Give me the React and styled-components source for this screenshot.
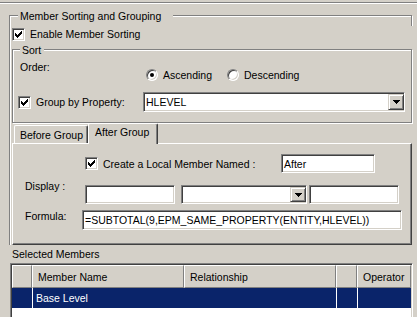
import styled, { createGlobalStyle } from "styled-components"

const GlobalStyle = createGlobalStyle`
  html, body {
    margin: 0;
    padding: 0;
    background: #d4d0c8;
  }
  body {
    font-family: "Liberation Sans", Arial, sans-serif;
    font-size: 10.5px;
    line-height: 16px;
    color: #000;
  }
  * { box-sizing: border-box; }
`

const Window = styled.div`
  width: 417px;
  height: 317px;
  overflow: hidden;
  background: #d4d0c8;
`

const TopRule = styled.div`
  margin-top: 2px;
  height: 2px;
  border-top: 1px solid #808080;
  border-bottom: 1px solid #fff;
`

const OuterGroup = styled.div`
  position: relative;
  margin: 11px 0 0 9px;
  width: 403px;
  padding-top: 10px;
  border-top: 1px solid #808080;
  border-left: 1px solid #808080;
  box-shadow: inset 1px 1px 0 #fff;

  &::after {
    content: "";
    position: absolute;
    top: 0;
    right: 0;
    width: 1px;
    height: 10px;
    background: #808080;
    box-shadow: 1px 0 0 #fff;
  }
`

const Legend = styled.span`
  position: absolute;
  top: -8px;
  left: ${p => p.$left}px;
  padding: 0 ${p => p.$padRight}px 0 2px;
  background: #d4d0c8;
  line-height: 16px;
  white-space: nowrap;
`

const EnableRow = styled.div`
  display: flex;
  align-items: center;
  height: 16px;
  margin-left: 2px;
`

const CheckBox = styled.span`
  display: inline-flex;
  align-items: center;
  justify-content: center;
  flex: none;
  width: 13px;
  height: 13px;
  background: #fff;
  border: 1px solid;
  border-color: #808080 #fff #fff #808080;
  box-shadow: inset 1px 1px 0 #404040, inset -1px -1px 0 #d4d0c8;
`

const CheckText = styled.span`
  margin-left: 5px;
  white-space: nowrap;
`

const SortGroup = styled.div`
  position: relative;
  margin: 7px 0 0 2px;
  width: 400px;
  height: 74px;
  padding-top: 9px;
  border: 1px solid #808080;
  box-shadow: inset 1px 1px 0 #fff, 1px 1px 0 #fff;
`

const OrderRow = styled.div`
  display: flex;
  align-items: flex-start;
  height: 24px;
`

const OrderLabel = styled.span`
  width: 133px;
  padding-left: 7px;
`

const RadioSet = styled.div`
  display: flex;
  margin-top: 8px;
  height: 16px;
  align-items: center;
`

const RadioItem = styled.label`
  display: flex;
  align-items: center;
  width: ${p => (p.$width ? `${p.$width}px` : "auto")};
  span { margin-left: 5px; }
`

const Radio = styled.i`
  display: inline-flex;
  align-items: center;
  justify-content: center;
  flex: none;
  width: 12px;
  height: 12px;
  border-radius: 50%;
  background: #fff;
  border: 1px solid;
  border-color: #808080 #fff #fff #808080;
  box-shadow: inset 1px 1px 0 #404040, inset -1px -1px 0 #d4d0c8;

  &::after {
    content: "";
    width: 4px;
    height: 4px;
    border-radius: 50%;
    background: ${p => (p.$checked ? "#000" : "transparent")};
  }
`

const GroupRow = styled.div`
  display: flex;
  align-items: center;
  height: 20px;
  margin-top: 9px;
`

const CheckField = styled.div`
  display: flex;
  align-items: center;
  width: ${p => p.$width}px;
  padding-left: ${p => p.$indent || 0}px;
  flex: none;
`

const Field = styled.div`
  display: flex;
  align-items: center;
  flex: none;
  width: ${p => p.$width}px;
  height: ${p => p.$height}px;
  margin-left: ${p => p.$gap || 0}px;
  padding: ${p => (p.$combo ? "0 0 0 2px" : "0 1px 0 2px")};
  background: #fff;
  border: 1px solid;
  border-color: #808080 #fff #fff #808080;
  box-shadow: inset 1px 1px 0 #404040, inset -1px -1px 0 #d4d0c8;
  white-space: nowrap;
  overflow: hidden;
`

const ComboInner = styled.div`
  display: flex;
  align-items: stretch;
  width: 100%;
  height: 100%;
  padding: 1px 0;
`

const ComboValue = styled.span`
  display: flex;
  align-items: center;
  flex: 1;
  overflow: hidden;
`

const DropButton = styled.span`
  display: flex;
  align-items: center;
  justify-content: center;
  flex: none;
  width: 16px;
  height: 100%;
  background: #d4d0c8;
  border: 1px solid;
  border-color: #d4d0c8 #404040 #404040 #d4d0c8;
  box-shadow: inset 1px 1px 0 #fff, inset -1px -1px 0 #808080;
`

const Tabs = styled.div`
  margin-left: 2px;
  width: 400px;
`

const TabStrip = styled.div`
  display: flex;
  align-items: flex-end;
  height: 20px;
  padding-left: 2px;
`

const Tab = styled.div`
  position: relative;
  z-index: ${p => (p.$active ? 1 : 0)};
  width: ${p => p.$width}px;
  height: ${p => (p.$active ? 21 : 18)}px;
  margin-bottom: ${p => (p.$active ? -1 : 0)}px;
  padding: ${p => (p.$active ? "0 0 0 6px" : "1px 0 0 5px")};
  background: #d4d0c8;
  border-top: 1px solid #fff;
  border-left: 1px solid #fff;
  border-right: 1px solid #404040;
  border-radius: 2px 2px 0 0;
  box-shadow: inset -1px 0 0 #808080;
  white-space: nowrap;
`

const TabPanel = styled.div`
  height: 102px;
  padding-top: 10px;
  border: 1px solid;
  border-color: #fff #404040 #404040 #fff;
  box-shadow: inset -1px -1px 0 #808080;
`

const PanelRow = styled.div`
  display: flex;
  align-items: ${p => p.$align || "center"};
  height: ${p => p.$height}px;
  margin-top: ${p => p.$top || 0}px;
`

const FieldLabel = styled.span`
  flex: none;
  width: ${p => p.$width}px;
  margin-left: 12px;
  white-space: nowrap;
`

const Fields = styled.div`
  display: flex;
  margin-top: ${p => p.$top}px;
`

const SectionLabel = styled.div`
  margin: 1px 0 0 12px;
  height: 16px;
`

const ListView = styled.div`
  margin: 1px 0 0 10px;
  width: 403px;
  height: 60px;
  padding: 1px;
  background: #fff;
  border: 1px solid;
  border-color: #808080 #fff #fff #808080;
  box-shadow: inset 1px 1px 0 #404040, inset -1px -1px 0 #d4d0c8;
`

const ListGrid = styled.div`
  display: grid;
  grid-template-columns: 20px 152px 152px 21px 54px;
`

const HeaderCell = styled.div`
  display: flex;
  align-items: center;
  height: 23px;
  padding-left: 5px;
  background: #d4d0c8;
  border-top: 1px solid #fff;
  border-left: 1px solid #fff;
  border-right: 1px solid #808080;
  border-bottom: 1px solid #808080;
  white-space: nowrap;
  overflow: hidden;
`

const RowCell = styled.div`
  display: flex;
  align-items: center;
  height: 20px;
  padding-left: 3px;
  background: #0a246a;
  color: #fff;
  border-left: 1px solid ${p => (p.$line ? "#fff" : "#0a246a")};
  white-space: nowrap;
`

const CHECK_ROWS = [
  [6, 0, 1], [5, 1, 2], [0, 2, 1], [4, 2, 3], [0, 3, 2],
  [3, 3, 3], [0, 4, 5], [1, 5, 3], [2, 6, 1],
]

function CheckMark() {
  return (
    <svg width="7" height="7" viewBox="0 0 7 7" shapeRendering="crispEdges">
      {CHECK_ROWS.map(([x, y, w]) => (
        <rect key={`${x}-${y}`} x={x} y={y} width={w} height="1" fill="#000" />
      ))}
    </svg>
  )
}

function Arrow() {
  return (
    <svg width="7" height="4" viewBox="0 0 7 4" shapeRendering="crispEdges">
      <rect x="0" y="0" width="7" height="1" fill="#000" />
      <rect x="1" y="1" width="5" height="1" fill="#000" />
      <rect x="2" y="2" width="3" height="1" fill="#000" />
      <rect x="3" y="3" width="1" height="1" fill="#000" />
    </svg>
  )
}

function Checked({ label }) {
  return (
    <>
      <CheckBox><CheckMark /></CheckBox>
      <CheckText>{label}</CheckText>
    </>
  )
}

function Combo({ width, height, value, gap }) {
  return (
    <Field $combo $width={width} $height={height} $gap={gap}>
      <ComboInner>
        <ComboValue>{value}</ComboValue>
        <DropButton><Arrow /></DropButton>
      </ComboInner>
    </Field>
  )
}

export default function App() {
  return (
    <>
      <GlobalStyle />
      <Window>
        <TopRule />
        <OuterGroup>
          <Legend $left={8} $padRight={12}>Member Sorting and Grouping</Legend>
          <EnableRow>
            <Checked label="Enable Member Sorting" />
          </EnableRow>

          <SortGroup>
            <Legend $left={7} $padRight={3}>Sort</Legend>
            <OrderRow>
              <OrderLabel>Order:</OrderLabel>
              <RadioSet>
                <RadioItem $width={81}><Radio $checked /><span>Ascending</span></RadioItem>
                <RadioItem><Radio /><span>Descending</span></RadioItem>
              </RadioSet>
            </OrderRow>
            <GroupRow>
              <CheckField $width={130} $indent={5}>
                <Checked label="Group by Property:" />
              </CheckField>
              <Combo width={262} height={20} value="HLEVEL" />
            </GroupRow>
          </SortGroup>

          <Tabs>
            <TabStrip>
              <Tab $width={74}>Before Group</Tab>
              <Tab $active $width={70}>After Group</Tab>
            </TabStrip>
            <TabPanel>
              <PanelRow $height={19}>
                <CheckField $width={268} $indent={72}>
                  <Checked label="Create a Local Member Named :" />
                </CheckField>
                <Field $width={94} $height={19}>After</Field>
              </PanelRow>
              <PanelRow $height={26} $top={5} $align="flex-start">
                <FieldLabel $width={60}>Display :</FieldLabel>
                <Fields $top={7}>
                  <Field $width={90} $height={19} />
                  <Combo width={126} height={19} gap={6} value="" />
                  <Field $width={90} $height={19} $gap={2} />
                </Fields>
              </PanelRow>
              <PanelRow $height={22} $top={4} $align="flex-start">
                <FieldLabel $width={57}>Formula:</FieldLabel>
                <Fields $top={2}>
                  <Field $width={320} $height={20}>=SUBTOTAL(9,EPM_SAME_PROPERTY(ENTITY,HLEVEL))</Field>
                </Fields>
              </PanelRow>
            </TabPanel>
          </Tabs>
        </OuterGroup>

        <SectionLabel>Selected Members</SectionLabel>
        <ListView>
          <ListGrid>
            <HeaderCell />
            <HeaderCell>Member Name</HeaderCell>
            <HeaderCell>Relationship</HeaderCell>
            <HeaderCell />
            <HeaderCell>Operator</HeaderCell>
            <RowCell />
            <RowCell $line>Base Level</RowCell>
            <RowCell />
            <RowCell $line />
            <RowCell $line />
          </ListGrid>
        </ListView>
      </Window>
    </>
  )
}
